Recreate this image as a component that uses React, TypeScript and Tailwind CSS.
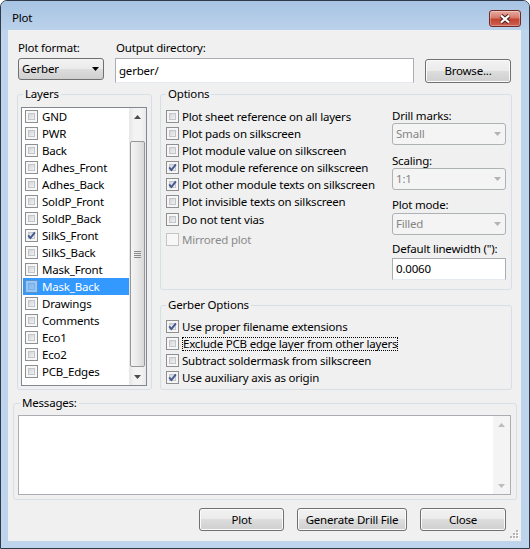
import React from "react";

const layers = [
  "GND",
  "PWR",
  "Back",
  "Adhes_Front",
  "Adhes_Back",
  "SoldP_Front",
  "SoldP_Back",
  "SilkS_Front",
  "SilkS_Back",
  "Mask_Front",
  "Mask_Back",
  "Drawings",
  "Comments",
  "Eco1",
  "Eco2",
  "PCB_Edges",
];

const plotOptions = [
  { label: "Plot sheet reference on all layers", checked: false },
  { label: "Plot pads on silkscreen", checked: false },
  { label: "Plot module value on silkscreen", checked: false },
  { label: "Plot module reference on silkscreen", checked: true },
  { label: "Plot other module texts on silkscreen", checked: true },
  { label: "Plot invisible texts on silkscreen", checked: false },
];

const gerberOptions = [
  { label: "Use proper filename extensions", checked: true },
  { label: "Exclude PCB edge layer from other layers", checked: false, focused: true },
  { label: "Subtract soldermask from silkscreen", checked: false },
  { label: "Use auxiliary axis as origin", checked: true },
];

function Checkbox({ checked = false, disabled = false }: { checked?: boolean; disabled?: boolean }) {
  return (
    <span
      className={`relative inline-block h-[13px] w-[13px] shrink-0 border ${
        disabled ? "border-[#c4c4c4] bg-[#f7f7f7]" : "border-[#8e8f8f] bg-[#f6f6f6]"
      }`}
    >
      {!disabled && (
        <span className="absolute inset-[2px] border border-[#c2c5c9] bg-[linear-gradient(135deg,#d3d5d8,#f0f1f2)]" />
      )}
      {checked && (
        <svg className="absolute left-0 top-0" width="11" height="11" viewBox="0 0 11 11">
          <path d="M2.2 5.4 L4.4 8 L8.9 2.4" fill="none" stroke="#43588f" strokeWidth="1.9" />
        </svg>
      )}
    </span>
  );
}

function Arrow({ color, up = false }: { color: string; up?: boolean }) {
  return (
    <svg width="7" height="4" viewBox="0 0 7 4">
      <path d={up ? "M0 4h7L3.5 0z" : "M0 0h7L3.5 4z"} fill={color} />
    </svg>
  );
}

function Dropdown({ value, disabled = false, className = "" }: { value: string; disabled?: boolean; className?: string }) {
  return (
    <div
      className={`flex items-center rounded-[3px] border pl-[3px] pr-[4px] ${
        disabled
          ? "border-[#adb2b5] bg-[#f4f4f4] text-[#858585]"
          : "border-[#707070] bg-[linear-gradient(#f2f2f2,#ebebeb_50%,#dddddd_50%,#cfcfcf)] text-black"
      } ${className}`}
    >
      <span className="flex-1 leading-[16px]">{value}</span>
      <Arrow color={disabled ? "#b3b3b3" : "#000"} />
    </div>
  );
}

function Button({ children, className = "" }: { children: React.ReactNode; className?: string }) {
  return (
    <button
      className={`rounded-[3px] border border-[#707070] bg-[linear-gradient(#f2f2f2,#ebebeb_50%,#dddddd_50%,#cfcfcf)] leading-[16px] shadow-[inset_0_0_0_1px_#fbfbfb] ${className}`}
    >
      {children}
    </button>
  );
}

function Group({ title, className = "", children }: { title: string; className?: string; children: React.ReactNode }) {
  return (
    <fieldset className={`rounded-[3px] border border-[#d5dfe5] ${className}`}>
      <legend className="ml-[5px] px-[2px] leading-[16px]">{title}</legend>
      {children}
    </fieldset>
  );
}

function OptionRow({ label, checked, disabled, focused }: { label: string; checked?: boolean; disabled?: boolean; focused?: boolean }) {
  return (
    <div className="flex h-[17px] items-center gap-[3px]">
      <Checkbox checked={checked} disabled={disabled} />
      <span
        className={`whitespace-nowrap ${disabled ? "text-[#8a8a8a]" : ""} ${
          focused ? "border border-dotted border-black leading-[12px]" : "leading-[16px]"
        }`}
      >
        {label}
      </span>
    </div>
  );
}

export default function App() {
  return (
    <div className="font-['Noto_Sans',sans-serif] text-[11.5px] tracking-[-0.2px] text-black">
      <div className="flex h-[549px] w-[530px] flex-col rounded-t-[7px] border border-[#2f3b4b] bg-[#bed4ec]">
        {/* title bar */}
        <div className="flex h-[29px] rounded-t-[6px] bg-[linear-gradient(#a8c4e3,#bad1ea)]">
          <span className="pl-[11px] pt-[9px] leading-[16px]">Plot</span>
          <div className="ml-auto mr-[8px] mt-[9px] flex h-[17px] w-[32px] items-center justify-center rounded-[3px] border border-[#6e2a24] bg-[linear-gradient(#e9aba2,#d6796b_45%,#c4432f_55%,#cc6152)] shadow-[inset_0_0_0_1px_rgba(255,255,255,0.3)]">
            <svg width="14" height="10" viewBox="0 0 14 10">
              <path d="M3 1.5 L11 8.5 M11 1.5 L3 8.5" stroke="#4a201b" strokeWidth="4.2" />
              <path d="M3 1.5 L11 8.5 M11 1.5 L3 8.5" stroke="#fff" strokeWidth="2.3" />
            </svg>
          </div>
        </div>

        {/* client area */}
        <div className="relative ml-[7px] flex h-[511px] w-[513px] flex-col bg-[#f0f0f0]">
          <div className="flex pl-[10px] pt-[10px]">
            <div className="flex w-[86px] flex-col">
              <span className="h-[16px] leading-[16px]">Plot format:</span>
              <Dropdown value="Gerber" className="mt-[2px] h-[22px]" />
            </div>
            <div className="ml-[11px] flex w-[299px] flex-col">
              <span className="ml-[1px] h-[16px] leading-[16px]">Output directory:</span>
              <div className="mt-[2px] flex h-[25px] items-center border border-[#abadb3] border-b-[#e3e9ef] bg-white pl-[3px]">
                gerber/
              </div>
            </div>
            <Button className="ml-[11px] mt-[19px] h-[24px] w-[86px]">Browse...</Button>
          </div>

          <div className="mt-[3px] flex gap-[8px] pl-[9px]">
            <Group title="Layers" className="h-[304px] w-[135px]">
              <div className="ml-[3px] mt-[5px] flex h-[279px] w-[126px] border border-[#828790] bg-white">
                <div className="flex flex-1 flex-col">
                  {layers.map((name) => {
                    const selected = name === "Mask_Back";
                    return (
                      <div
                        key={name}
                        className={`ml-[1px] flex h-[17px] items-center gap-[4px] pl-[2px] ${
                          selected ? "bg-[#3399ff] text-white" : ""
                        }`}
                      >
                        <span className={selected ? "flex opacity-50" : "flex"}>
                          <Checkbox checked={name === "SilkS_Front"} />
                        </span>
                        <span className="leading-[16px]">{name}</span>
                      </div>
                    );
                  })}
                </div>
                <div className="flex w-[17px] flex-col bg-[linear-gradient(to_right,#e6e6e6,#f3f3f3_30%,#f3f3f3_70%,#e9e9e9)]">
                  <div className="flex h-[17px] items-center justify-center">
                    <Arrow color="#4b4b4b" up />
                  </div>
                  <div className="mx-[1px] mb-[1px] mt-[16px] flex flex-1 flex-col items-center justify-center gap-[1px] rounded-[2px] border border-[#979797] bg-[linear-gradient(to_right,#f4f4f4,#e9e9e9_50%,#d9d9d9)]">
                    <span className="h-px w-[7px] bg-[#8a8a8a]" />
                    <span className="h-px w-[7px] bg-[#8a8a8a]" />
                    <span className="h-px w-[7px] bg-[#8a8a8a]" />
                    <span className="h-px w-[7px] bg-[#8a8a8a]" />
                  </div>
                  <div className="flex h-[17px] items-center justify-center">
                    <Arrow color="#4b4b4b" />
                  </div>
                </div>
              </div>
            </Group>

            <div className="flex w-[352px] flex-col gap-[7px]">
              <Group title="Options" className="h-[204px]">
                <div className="flex">
                  <div className="flex flex-col pl-[5px] pt-[6px]">
                    {plotOptions.map((o) => (
                      <OptionRow key={o.label} label={o.label} checked={o.checked} />
                    ))}
                    <div className="mt-[1px]">
                      <OptionRow label="Do not tent vias" />
                    </div>
                    <div className="mt-[3px]">
                      <OptionRow label="Mirrored plot" disabled />
                    </div>
                  </div>
                  <div className="ml-auto mr-[5px] flex w-[114px] flex-col pt-[6px]">
                    <span className="h-[15px] leading-[15px]">Drill marks:</span>
                    <Dropdown value="Small" disabled className="h-[22px]" />
                    <span className="mt-[8px] h-[15px] leading-[15px]">Scaling:</span>
                    <Dropdown value="1:1" disabled className="h-[22px]" />
                    <span className="mt-[7px] h-[15px] leading-[15px]">Plot mode:</span>
                    <Dropdown value="Filled" disabled className="mt-[1px] h-[22px]" />
                    <span className="mt-[6px] h-[15px] whitespace-nowrap leading-[15px]">Default linewidth ("):</span>
                    <div className="mt-[2px] flex h-[22px] items-center border border-[#abadb3] border-b-[#e3e9ef] bg-white pl-[3px]">
                      0.0060
                    </div>
                  </div>
                </div>
              </Group>

              <Group title="Gerber Options" className="h-[93px]">
                <div className="flex flex-col pl-[5px] pt-[5px]">
                  {gerberOptions.map((o) => (
                    <OptionRow key={o.label} label={o.label} checked={o.checked} focused={o.focused} />
                  ))}
                </div>
              </Group>
            </div>
          </div>

          <Group title="Messages:" className="ml-[5px] mt-[5px] h-[105px] w-[504px] [&>legend]:ml-[6px]">
            <div className="ml-[4px] mt-[4px] flex h-[80px] w-[493px] border border-[#abadb3] bg-white">
              <div className="flex-1" />
              <div className="flex w-[17px] flex-col justify-between bg-[#f4f4f4]">
                <div className="flex h-[17px] items-center justify-center">
                  <Arrow color="#bdbdbd" up />
                </div>
                <div className="flex h-[17px] items-center justify-center">
                  <Arrow color="#bdbdbd" />
                </div>
              </div>
            </div>
          </Group>

          <div className="mt-[8px] flex justify-end gap-[13px] pr-[15px]">
            <Button className="h-[23px] w-[85px]">Plot</Button>
            <Button className="h-[23px] w-[110px]">Generate Drill File</Button>
            <Button className="h-[23px] w-[86px]">Close</Button>
          </div>

          {/* size grip */}
          <svg className="absolute bottom-[2px] right-[2px]" width="10" height="10" viewBox="0 0 10 10">
            {[
              [7, 1],
              [4, 4],
              [7, 4],
              [1, 7],
              [4, 7],
              [7, 7],
            ].map(([x, y]) => (
              <g key={`${x}-${y}`}>
                <rect x={x + 1} y={y + 1} width="2" height="2" fill="#ffffff" />
                <rect x={x} y={y} width="2" height="2" fill="#b4b4b4" />
              </g>
            ))}
          </svg>
        </div>
      </div>
    </div>
  );
}
